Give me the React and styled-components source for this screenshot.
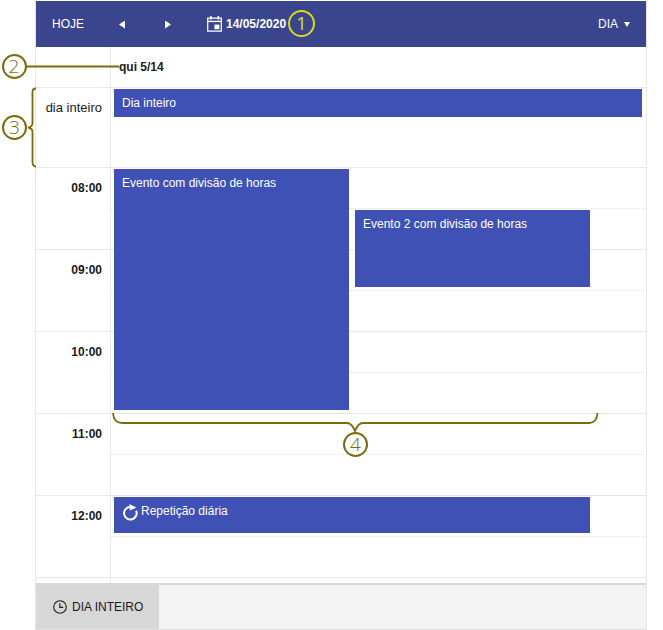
import styled, { createGlobalStyle } from "styled-components";

const GlobalStyle = createGlobalStyle`
  html, body {
    margin: 0;
    padding: 0;
    height: 100%;
    background: #fff;
    overflow: hidden;
  }
  body {
    font-family: "Liberation Sans", Arial, sans-serif;
    font-size: 12px;
    color: #1a1a1a;
  }
`;

const Page = styled.div`
  position: relative;
  width: 663px;
  height: 630px;
  overflow: hidden;
`;

const Calendar = styled.div`
  box-sizing: border-box;
  width: 612px;
  height: 630px;
  margin-left: 35px;
  padding-top: 1px;
  display: flex;
  flex-direction: column;
  border-left: 1px solid #e8e8e8;
  border-right: 1px solid #e8e8e8;
  border-bottom: 1px solid #e0e0e0;
`;

const Toolbar = styled.div`
  flex: none;
  height: 46px;
  display: flex;
  align-items: center;
  padding: 0 16px;
  background: #3b458e;
  color: #fff;
`;

const ToolbarText = styled.span`
  font-size: 12px;
  font-weight: ${(p) => (p.$bold ? 700 : 400)};
`;

const NavArrow = styled.button`
  width: 6px;
  height: 8px;
  margin: 1px 0 0 ${(p) => p.$gap}px;
  padding: 0;
  border: 0;
  background: #fff;
  clip-path: ${(p) =>
    p.$dir === "left"
      ? "polygon(100% 0, 100% 100%, 0 50%)"
      : "polygon(0 0, 100% 50%, 0 100%)"};
`;

const DateBox = styled.div`
  margin-left: 36px;
  display: flex;
  align-items: center;
  gap: 4px;
`;

const ViewPicker = styled.div`
  margin-left: auto;
  display: flex;
  align-items: center;
  gap: 6px;
`;

const Caret = styled.span`
  width: 6px;
  height: 5px;
  margin-top: 1px;
  background: #fff;
  clip-path: polygon(0 0, 100% 0, 50% 100%);
`;

const Row = styled.div`
  flex: none;
  display: flex;
  height: ${(p) => p.$height}px;
  border-bottom: 1px solid #e8e8e8;
  box-sizing: border-box;
`;

const Gutter = styled.div`
  flex: none;
  box-sizing: border-box;
  width: 75px;
  padding: ${(p) => p.$top || 0}px 8px 0 0;
  border-right: 1px solid #e8e8e8;
  text-align: right;
  font-size: ${(p) => (p.$bold ? 12 : 13)}px;
  font-weight: ${(p) => (p.$bold ? 700 : 400)};
  line-height: 14px;
`;

const DayTitle = styled.div`
  align-self: center;
  margin-left: 8px;
  font-weight: 700;
  color: #222;
`;

const AllDayCell = styled.div`
  flex: 1;
  padding: 1px 4px 0 3px;
`;

const EventBlock = styled.div`
  box-sizing: border-box;
  padding: 7px 8px;
  background: #3f51b5;
  color: #fff;
  line-height: 14px;
`;

const AllDayEvent = styled(EventBlock)`
  height: 28px;
`;

const TimeGrid = styled.div`
  position: relative;
  flex: 1;
  min-height: 0;
  overflow: hidden;
`;

const HourRow = styled.div`
  display: flex;
  height: 82px;
  box-sizing: border-box;
  border-bottom: 1px solid #e8e8e8;
`;

const Slots = styled.div`
  flex: 1;
`;

const HalfSlot = styled.div`
  box-sizing: border-box;
  height: 41px;
  border-bottom: 1px dotted #e4e4e4;
`;

const TimedEvent = styled(EventBlock)`
  position: absolute;
  left: ${(p) => p.$left}px;
  top: ${(p) => p.$top}px;
  width: ${(p) => p.$width}px;
  height: ${(p) => p.$height}px;
`;

const RepeatLine = styled.div`
  display: flex;
  align-items: flex-start;
  gap: 3px;
`;

const Footer = styled.div`
  flex: none;
  height: 46px;
  display: flex;
  background: #f3f3f3;
  border-top: 2px solid #d9d9d9;
  box-sizing: border-box;
`;

const FooterTab = styled.div`
  width: 123px;
  display: flex;
  align-items: center;
  gap: 5px;
  padding-left: 17px;
  box-sizing: border-box;
  background: #d7d7d7;
  color: #1a1a1a;
`;

const Marker = styled.span`
  position: absolute;
  left: ${(p) => p.$x - p.$size / 2}px;
  top: ${(p) => p.$y - p.$size / 2}px;
  box-sizing: border-box;
  width: ${(p) => p.$size}px;
  height: ${(p) => p.$size}px;
  display: flex;
  align-items: center;
  justify-content: center;
  border: ${(p) => p.$ring}px solid ${(p) => p.$color};
  border-radius: 50%;
  background: ${(p) => p.$fill || "transparent"};
  color: ${(p) => p.$color};
  font-family: "Open Sans", sans-serif;
  font-size: 19px;
  font-weight: ${(p) => p.$weight || 300};
  line-height: 1;
`;

const Marks = styled.svg`
  position: absolute;
  left: 0;
  top: 0;
  pointer-events: none;
`;

const CalendarIcon = () => (
  <svg width="15" height="16" viewBox="0 0 15 16">
    <path d="M0.7 2.2h13.6v13H0.7z" fill="none" stroke="#fff" strokeWidth="1.2" />
    <path d="M0.7 5.4h13.6" fill="none" stroke="#fff" strokeWidth="1.4" />
    <rect x="3.2" y="0" width="1.5" height="3.6" fill="#fff" />
    <rect x="10.6" y="0" width="1.5" height="3.6" fill="#fff" />
    <rect x="7.4" y="8.6" width="5" height="4.6" fill="#fff" />
  </svg>
);

const RepeatIcon = () => (
  <svg width="16" height="18" viewBox="0 0 16 18">
    <path
      d="M14.1 6.6A6.3 6.3 0 1 1 8 2.9"
      fill="none"
      stroke="#fff"
      strokeWidth="2"
    />
    <path d="M7.4 0L14.4 3.6 7.8 6.6z" fill="#fff" />
  </svg>
);

const ClockIcon = () => (
  <svg width="14" height="14" viewBox="0 0 14 14">
    <circle cx="7" cy="7" r="6.3" fill="none" stroke="#1a1a1a" strokeWidth="1.1" />
    <path d="M6.8 3.2v4.2h3.4" fill="none" stroke="#1a1a1a" strokeWidth="1.1" />
  </svg>
);

const hours = ["08:00", "09:00", "10:00", "11:00", "12:00", ""];

export default function App() {
  return (
    <Page>
      <GlobalStyle />
      <Calendar>
        <Toolbar>
          <ToolbarText>HOJE</ToolbarText>
          <NavArrow $dir="left" $gap={35} aria-label="anterior" />
          <NavArrow $dir="right" $gap={40} aria-label="próximo" />
          <DateBox>
            <CalendarIcon />
            <ToolbarText $bold>14/05/2020</ToolbarText>
          </DateBox>
          <ViewPicker>
            <ToolbarText>DIA</ToolbarText>
            <Caret />
          </ViewPicker>
        </Toolbar>

        <Row $height={41}>
          <Gutter />
          <DayTitle>qui 5/14</DayTitle>
        </Row>

        <Row $height={80}>
          <Gutter $top={13}>dia inteiro</Gutter>
          <AllDayCell>
            <AllDayEvent>Dia inteiro</AllDayEvent>
          </AllDayCell>
        </Row>

        <TimeGrid>
          {hours.map((hour, i) => (
            <HourRow key={i}>
              <Gutter $bold $top={13}>
                {hour}
              </Gutter>
              <Slots>
                <HalfSlot />
                <HalfSlot />
              </Slots>
            </HourRow>
          ))}
          <TimedEvent $left={78} $top={1} $width={235} $height={241}>
            Evento com divisão de horas
          </TimedEvent>
          <TimedEvent $left={319} $top={42} $width={235} $height={77}>
            Evento 2 com divisão de horas
          </TimedEvent>
          <TimedEvent $left={78} $top={329} $width={476} $height={36}>
            <RepeatLine>
              <RepeatIcon />
              Repetição diária
            </RepeatLine>
          </TimedEvent>
        </TimeGrid>

        <Footer>
          <FooterTab>
            <ClockIcon />
            DIA INTEIRO
          </FooterTab>
        </Footer>
      </Calendar>

      <Marks width="663" height="630" viewBox="0 0 663 630">
        <path d="M26 66.5H119" fill="none" stroke="#7a6c0c" strokeWidth="2" />
        <path
          d="M36 88.5C33 88.5 32.5 90 32.5 92V123C32.5 125.5 31 127 28 127.5C31 128 32.5 129.5 32.5 132V162C32.5 164.5 33 166.5 36 166.5"
          fill="none"
          stroke="#7a6c0c"
          strokeWidth="1.8"
        />
        <path
          d="M113 413C113.5 420 117 423 122 423H347C350 423 353 426 355 431C357 426 360 423 363 423H589C594 423 597 420 597.5 413"
          fill="none"
          stroke="#7a6c0c"
          strokeWidth="1.8"
        />
      </Marks>
      <Marker $x={301.5} $y={23} $size={27} $ring={2.5} $weight={400} $color="#d3dc1e">1</Marker>
      <Marker $x={14} $y={66.5} $size={25} $ring={2} $color="#7a6c0c" $fill="#fff">2</Marker>
      <Marker $x={14.5} $y={127} $size={25} $ring={2} $color="#7a6c0c" $fill="#fff">3</Marker>
      <Marker $x={355.5} $y={444} $size={25} $ring={2} $color="#7a6c0c" $fill="#fff">4</Marker>
    </Page>
  );
}
